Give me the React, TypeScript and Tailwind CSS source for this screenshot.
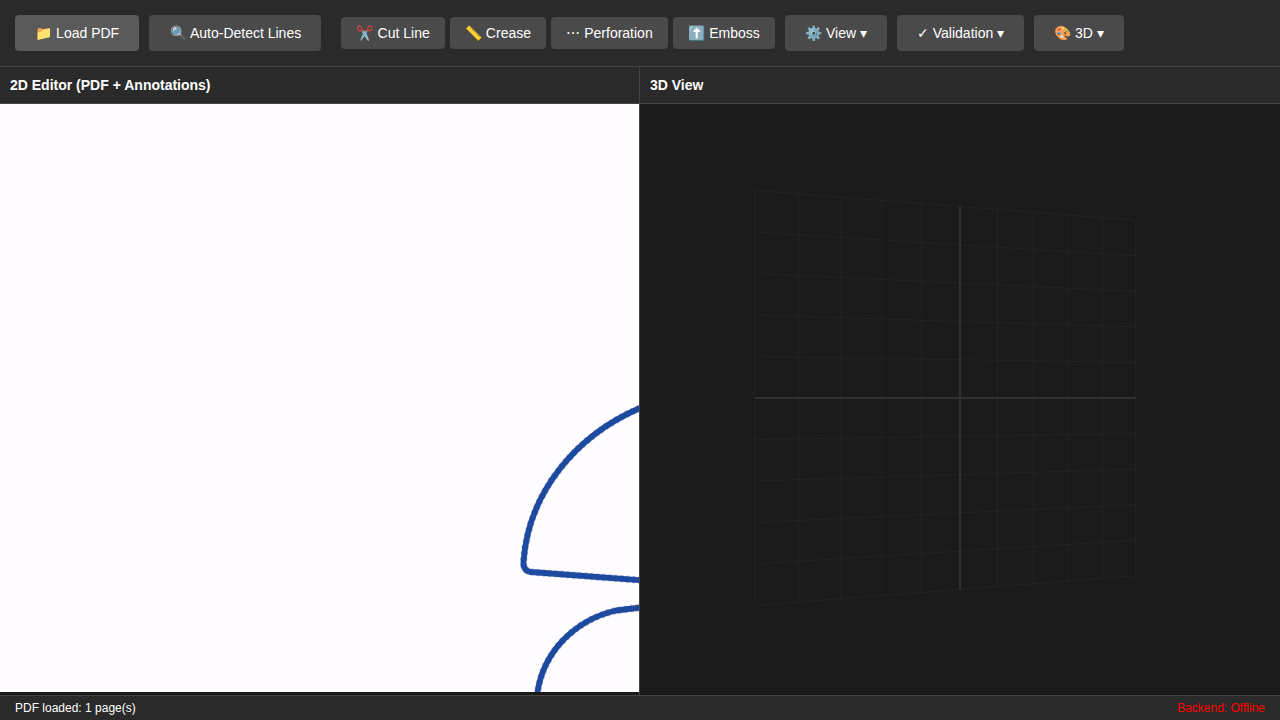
import type { ReactNode } from "react";

const columns = [754.8, 798.5, 841, 881.7, 921.5, 960, 997.3, 1033.5, 1068.5, 1102.5, 1135.5];
const rows = [-5, -4, -3, -2, -1, 0, 1, 2, 3, 4, 5];
const LEFT = 754.8;
const RIGHT = 1135.5;
const HORIZON = 398;

const halfStep = (x: number) => 41.5 - ((x - LEFT) / (RIGHT - LEFT)) * 5.95;

const outlines = [
  "M645 406 C575 434 528 494 523.5 562 Q523 571 531 572 L645 580.5",
  "M645 607 L616 610.5 C575 620 542 652 537 696",
];

function PerspectiveGrid() {
  return (
    <svg className="block h-[591px] w-[640px]" viewBox="640 104 640 591" fill="none">
      <g stroke="#232323" strokeWidth="1">
        {rows.filter((r) => r !== 0).map((r) => (
          <line key={r} x1={LEFT} y1={HORIZON + r * halfStep(LEFT)} x2={RIGHT} y2={HORIZON + r * halfStep(RIGHT)} />
        ))}
        {columns.filter((_, i) => i !== 5).map((x) => (
          <line key={x} x1={x} y1={HORIZON - 5 * halfStep(x)} x2={x} y2={HORIZON + 5 * halfStep(x)} />
        ))}
      </g>
      <g stroke="#303030" strokeWidth="2">
        <line x1={LEFT} y1={HORIZON} x2={RIGHT} y2={HORIZON} />
        <line x1="960" y1="206.5" x2="960" y2="589.5" />
      </g>
    </svg>
  );
}

function ToolbarButton({ children, className }: { children: ReactNode; className: string }) {
  return (
    <button className={`shrink-0 rounded text-center text-sm leading-4 whitespace-nowrap ${className}`}>
      {children}
    </button>
  );
}

function PanelHeader({ children }: { children: ReactNode }) {
  return (
    <h3 className="h-[37px] shrink-0 border-b border-[#444] bg-[#2a2a2a] px-2.5 py-2.5 text-sm leading-4 font-bold">
      {children}
    </h3>
  );
}

export default function App() {
  return (
    <div className="flex h-screen flex-col overflow-hidden bg-[#1a1a1a] font-['Liberation_Sans',Arial,sans-serif] text-white">
      <header className="flex h-[67px] shrink-0 items-center gap-2.5 border-b border-[#444] bg-[#2a2a2a] px-[15px]">
        <ToolbarButton className="h-9 w-[124px] bg-[#5a5a5a]">
          📁<span className="ml-[0.4px]"> Load PDF</span>
        </ToolbarButton>
        <ToolbarButton className="h-9 w-[172px] bg-[#4a4a4a] pl-px">🔍 Auto-Detect Lines</ToolbarButton>
        <div className="ml-2.5 flex gap-[5px]">
          <ToolbarButton className="h-8 w-[104px] bg-[#4a4a4a]">
            ✂️<span className="ml-[0.5px]"> Cut Line</span>
          </ToolbarButton>
          <ToolbarButton className="h-8 w-24 bg-[#4a4a4a]">📏 Crease</ToolbarButton>
          <ToolbarButton className="h-8 w-[117px] bg-[#4a4a4a]">⋯ Perforation</ToolbarButton>
          <ToolbarButton className="h-8 w-[102px] bg-[#4a4a4a]">⬆️ Emboss</ToolbarButton>
        </div>
        <ToolbarButton className="h-9 w-[102px] bg-[#4a4a4a]">⚙️ View ▾</ToolbarButton>
        <ToolbarButton className="h-9 w-[127px] bg-[#4a4a4a]">✓ Validation ▾</ToolbarButton>
        <ToolbarButton className="h-9 w-[90px] bg-[#4a4a4a]">🎨 3D ▾</ToolbarButton>
      </header>

      <main className="flex min-h-0 flex-1">
        <section className="flex w-[640px] shrink-0 flex-col border-r border-[#444]">
          <PanelHeader>2D Editor (PDF + Annotations)</PanelHeader>
          <svg className="block h-[588px] w-[639px] bg-[#fffdff]" viewBox="0 104 639 588" fill="none">
            {outlines.map((d) => (
              <g key={d} strokeLinejoin="round">
                <path d={d} stroke="#b4b2da" strokeWidth="7.2" strokeDasharray="3 3" />
                <path d={d} stroke="#1c4a9f" strokeWidth="5.8" />
              </g>
            ))}
          </svg>
        </section>
        <section className="flex min-w-0 flex-1 flex-col">
          <PanelHeader>3D View</PanelHeader>
          <PerspectiveGrid />
        </section>
      </main>

      <footer className="flex h-[25px] shrink-0 items-center justify-between border-t border-[#444] bg-[#2a2a2a] px-[15px] text-xs leading-[14px]">
        <span>PDF loaded: 1 page(s)</span>
        <span className="text-[#f00]">Backend: Offline</span>
      </footer>
    </div>
  );
}
